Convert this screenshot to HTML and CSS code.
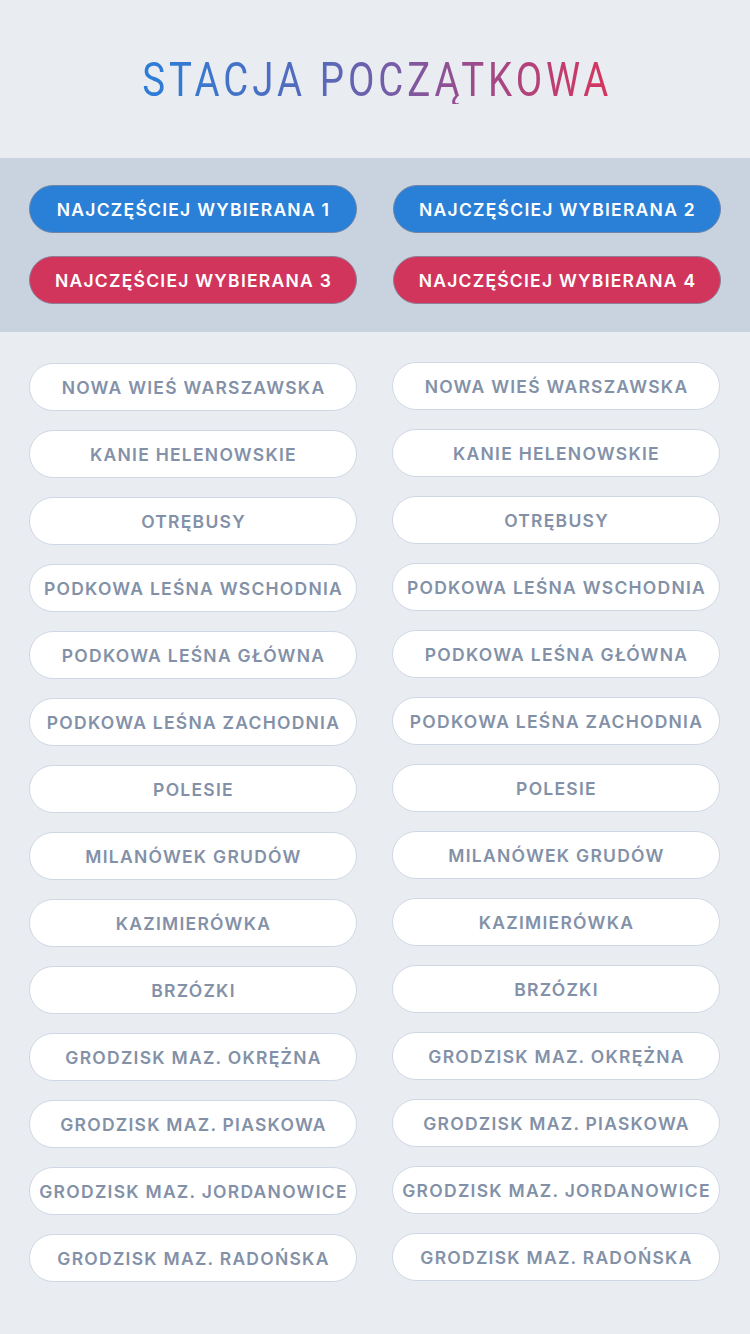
FILE: index.html
```html
<!DOCTYPE html>
<html lang="pl">
<head>
<meta charset="utf-8">
<link rel="stylesheet" href="styles.css">
</head>
<body>
<header class="header">
  <h1 class="title">STACJA POCZĄTKOWA</h1>
</header>
<section class="favs">
  <button class="fav fav-blue">NAJCZĘŚCIEJ WYBIERANA 1</button>
  <button class="fav fav-blue">NAJCZĘŚCIEJ WYBIERANA 2</button>
  <button class="fav fav-red">NAJCZĘŚCIEJ WYBIERANA 3</button>
  <button class="fav fav-red">NAJCZĘŚCIEJ WYBIERANA 4</button>
</section>
<main class="stations">
  <div class="col">
    <button class="st">NOWA WIEŚ WARSZAWSKA</button>
    <button class="st">KANIE HELENOWSKIE</button>
    <button class="st">OTRĘBUSY</button>
    <button class="st">PODKOWA LEŚNA WSCHODNIA</button>
    <button class="st">PODKOWA LEŚNA GŁÓWNA</button>
    <button class="st">PODKOWA LEŚNA ZACHODNIA</button>
    <button class="st">POLESIE</button>
    <button class="st">MILANÓWEK GRUDÓW</button>
    <button class="st">KAZIMIERÓWKA</button>
    <button class="st">BRZÓZKI</button>
    <button class="st">GRODZISK MAZ. OKRĘŻNA</button>
    <button class="st">GRODZISK MAZ. PIASKOWA</button>
    <button class="st">GRODZISK MAZ. JORDANOWICE</button>
    <button class="st">GRODZISK MAZ. RADOŃSKA</button>
  </div>
  <div class="col col-right">
    <button class="st">NOWA WIEŚ WARSZAWSKA</button>
    <button class="st">KANIE HELENOWSKIE</button>
    <button class="st">OTRĘBUSY</button>
    <button class="st">PODKOWA LEŚNA WSCHODNIA</button>
    <button class="st">PODKOWA LEŚNA GŁÓWNA</button>
    <button class="st">PODKOWA LEŚNA ZACHODNIA</button>
    <button class="st">POLESIE</button>
    <button class="st">MILANÓWEK GRUDÓW</button>
    <button class="st">KAZIMIERÓWKA</button>
    <button class="st">BRZÓZKI</button>
    <button class="st">GRODZISK MAZ. OKRĘŻNA</button>
    <button class="st">GRODZISK MAZ. PIASKOWA</button>
    <button class="st">GRODZISK MAZ. JORDANOWICE</button>
    <button class="st">GRODZISK MAZ. RADOŃSKA</button>
  </div>
</main>
</body>
</html>
```
FILE: styles.css
```css
* { box-sizing: border-box; }
html, body {
  margin: 0;
  padding: 0;
  background: #e9edf2;
  font-family: Roboto, "Noto Sans", sans-serif;
}
body { width: 750px; min-height: 1334px; }
.header {
  height: 158px;
  display: flex;
  align-items: center;
  justify-content: center;
}
.title {
  margin: 0;
  font-size: 48px;
  font-weight: 400;
  letter-spacing: 5px;
  line-height: 1;
  white-space: nowrap;
  background: linear-gradient(90deg, #2a7ed8 0%, #5a68b8 40%, #9a4c8e 70%, #d6355c 100%);
  -webkit-background-clip: text;
  background-clip: text;
  color: transparent;
  padding: 2px 0 0 5px;
  transform: scaleX(0.8);
}
.favs {
  background: #c9d3df;
  padding: 27px 29px 28px;
  display: grid;
  grid-template-columns: 328px 328px;
  column-gap: 36px;
  row-gap: 23px;
}
.fav {
  height: 48px;
  border-radius: 24px;
  border: 1px solid #7f8ea5;
  color: #fff;
  font-family: Inter, Roboto, "Noto Sans", sans-serif;
  font-size: 17.5px;
  font-weight: 600;
  letter-spacing: 1.25px;
  padding: 0 0 0 1px;
  white-space: nowrap;
}
.fav-blue { background: #2a80d7; border-color: #6f86a8; }
.fav-red { background: #d2355c; border-color: #8f7f96; }
.stations {
  display: grid;
  grid-template-columns: 328px 328px;
  column-gap: 35px;
  padding: 31px 29px 40px;
}
.col {
  display: flex;
  flex-direction: column;
  gap: 19px;
}
.col-right { margin-top: -1px; }
.st {
  height: 48px;
  border-radius: 24px;
  background: #fff;
  border: 1px solid #cfd8e4;
  color: #8391a8;
  font-family: Inter, Roboto, "Noto Sans", sans-serif;
  font-size: 17.5px;
  font-weight: 600;
  letter-spacing: 1.25px;
  padding: 0 0 0 1px;
  white-space: nowrap;
}
```
